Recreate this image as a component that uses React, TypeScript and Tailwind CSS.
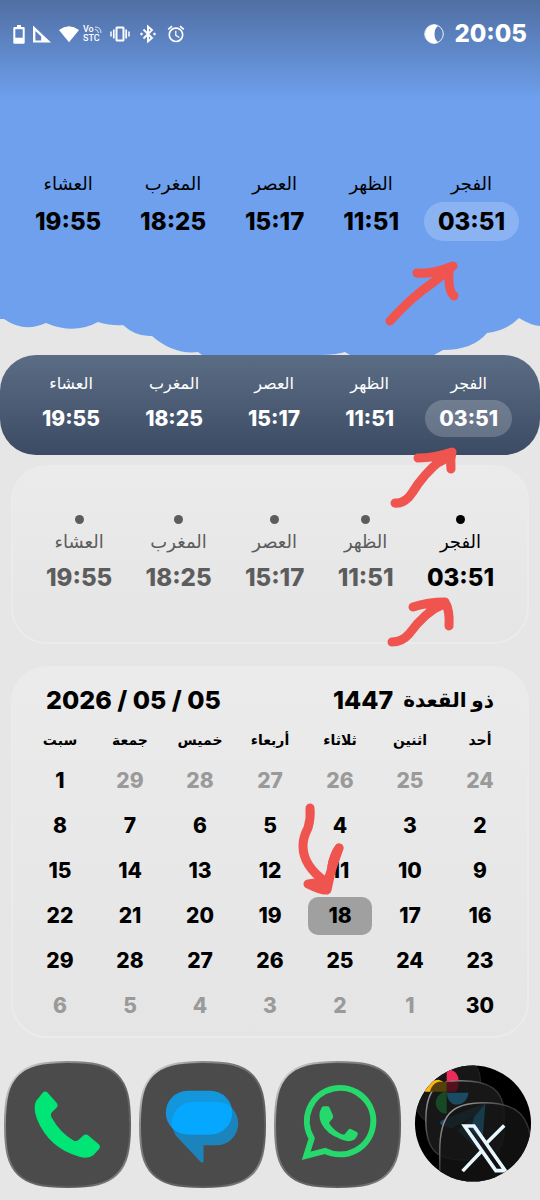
import type { ReactNode } from "react";
import clsx from "clsx";
import { MdAlarm } from "react-icons/md";

// ---------- DATA ----------
const PRAYERS = [
  { name: "الفجر", time: "03:51", next: true },
  { name: "الظهر", time: "11:51", next: false },
  { name: "العصر", time: "15:17", next: false },
  { name: "المغرب", time: "18:25", next: false },
  { name: "العشاء", time: "19:55", next: false },
];

const WEEKDAYS = ["أحد", "اثنين", "ثلاثاء", "أربعاء", "خميس", "جمعة", "سبت"];

const TODAY = 18;
const PREV_MONTH = [24, 25, 26, 27, 28, 29];
const MONTH_DAYS = 30;

// 6 weeks x 7 days, padded with the neighbouring months
const days = [
  ...PREV_MONTH.map((n) => ({ n, outside: true })),
  ...Array.from({ length: MONTH_DAYS }, (_, i) => ({ n: i + 1, outside: false })),
  ...Array.from({ length: 6 }, (_, i) => ({ n: i + 1, outside: true })),
];
const weeks = Array.from({ length: 6 }, (_, w) => days.slice(w * 7, w * 7 + 7));

// ---------- STATUS BAR ----------
function StatusBar() {
  return (
    <header className="flex items-center justify-between px-[13px] pt-4 text-white">
      <div className="flex h-9 items-center gap-2">
        <svg viewBox="0 0 12 19" className="h-[19px] w-3" aria-hidden>
          <path d="M4 0h4v2h2.500q1.200 0 1.200 1.200v14.300q0 1.200-1.200 1.200h-9Q.3 18.700.3 17.500V3.200Q.3 2 1.500 2H4z" fill="white" />
          <rect x="2.300" y="4.200" width="7.400" height="8.500" fill="#5a80c2" />
        </svg>
        <svg viewBox="0 0 18 18" className="h-[18px] w-[18px]" aria-hidden>
          <path fillRule="evenodd" d="M0 .5 18 17.500H0zM2.400 6v9.500h5.800V11.400z" fill="white" />
        </svg>
        <svg viewBox="0 0 22 18" className="h-[18px] w-5" aria-hidden>
          <path d="M0 4.500Q11-3.500 22 4.500L11 18z" fill="white" />
        </svg>
        <div className="-ml-1 flex flex-col font-['Roboto',sans-serif] text-[9px] leading-[9px] font-medium">
          <span className="flex items-center">
            Vo
            <svg viewBox="0 0 8 8" className="h-2 w-2" fill="none" stroke="white" aria-hidden>
              <path d="M1 1q6 0 6 6M1 3.500q3 0 3.500 3.500" strokeWidth="0.800" />
            </svg>
          </span>
          <span>STC</span>
        </div>
        <svg viewBox="0 0 20 16" className="h-4 w-5" fill="none" stroke="white" aria-hidden>
          <rect x="6.500" y="1.500" width="7" height="13" rx="0.500" strokeWidth="2" />
          <path d="M3.800 3.500v9M16.200 3.500v9" strokeWidth="1.700" />
          <path d="M1 5.500v5M19 5.500v5" strokeWidth="1.500" />
        </svg>
        <svg viewBox="0 0 20 20" className="h-5 w-5" fill="none" stroke="white" aria-hidden>
          <path d="M5.500 5.500 14 14l-4 3.500v-15L14 6l-8.500 8.500" strokeWidth="1.900" />
          <path d="M3.500 8.700 4.800 10 3.500 11.300 2.200 10zM16.500 8.700 17.800 10 16.500 11.300 15.200 10z" fill="white" strokeWidth="0.600" />
        </svg>
        <MdAlarm className="h-5 w-5" />
      </div>
      <div className="flex items-center gap-[10px]">
        <svg viewBox="0 0 20 20" className="h-5 w-5" aria-hidden>
          <circle cx="10" cy="10" r="9.300" fill="none" stroke="white" strokeWidth="0.900" />
          <path d="M10.500.5a9.500 9.500 0 0 0 0 19 Q12 19.500 14 18Q10.500 15.500 10.500 10T14 2Q12.500.5 10.500.5z" fill="white" />
        </svg>
        <time className="text-[24px] leading-9 font-extrabold">20:05</time>
      </div>
    </header>
  );
}

// ---------- HAND-DRAWN ARROWS ----------
function Arrow({ viewBox, className, children }: { viewBox: string; className: string; children: ReactNode }) {
  return (
    <svg
      viewBox={viewBox}
      className={clsx("pointer-events-none absolute z-10", className)}
      fill="none"
      stroke="#f0544f"
      strokeWidth="9"
      strokeLinecap="round"
      strokeLinejoin="round"
      aria-hidden
    >
      {children}
    </svg>
  );
}

// ---------- PRAYER WIDGETS ----------
function SkyWidget() {
  return (
    <ul className="flex justify-between px-[35px]">
      {PRAYERS.map((p) => (
        <li key={p.name} className="flex flex-col items-center gap-[2px]">
          <span className="text-[18px] leading-8">{p.name}</span>
          <time
            className={clsx(
              "-mx-[14px] rounded-full px-[14px] text-[24px] leading-[39px] font-extrabold",
              p.next && "bg-white/20",
            )}
          >
            {p.time}
          </time>
        </li>
      ))}
    </ul>
  );
}

function DarkWidget() {
  return (
    <section className="relative rounded-[36px] bg-linear-to-b from-[#5b6d85] to-[#3b4b63] px-[42px] pt-3 pb-[18px] text-white">
      <ul className="flex justify-between">
        {PRAYERS.map((p) => (
          <li key={p.name} className="flex flex-col items-center gap-px">
            <span className="text-[16px] leading-8">{p.name}</span>
            <time
              className={clsx(
                "-mx-[14px] rounded-full px-[14px] text-[21px] leading-[37px] font-extrabold",
                p.next && "bg-white/20",
              )}
            >
              {p.time}
            </time>
          </li>
        ))}
      </ul>
      <Arrow viewBox="388 444 72 66" className="right-20 -bottom-[55px] h-[66px] w-[72px]">
        <path d="M395 503Q402 504 409 497Q413 492 418 484Q432 465 451 453M418 458Q435 458 452 452Q450 460 451 469M440 462L450 456" />
      </Arrow>
    </section>
  );
}

function Card({ className, children }: { className: string; children: ReactNode }) {
  return (
    <section
      className={clsx(
        "relative mx-[11px] rounded-[36px] border-2 border-[#ebebeb] bg-linear-to-b from-[#ebebeb] to-[#e5e5e5]",
        className,
      )}
    >
      {children}
    </section>
  );
}

function DotsWidget() {
  return (
    <Card className="mt-[10px] px-[33px] pt-12 pb-[45px]">
      <ul className="flex justify-between">
        {PRAYERS.map((p) => (
          <li
            key={p.name}
            className={clsx("flex flex-col items-center", p.next ? "text-black" : "text-[#5c5c5c]")}
          >
            <span className="h-[9px] w-[9px] rounded-full bg-current" />
            <span className="mt-[2px] text-[18px] leading-8">{p.name}</span>
            <time className="text-[24px] leading-[39px] font-extrabold">{p.time}</time>
          </li>
        ))}
      </ul>
      <Arrow viewBox="385 595 72 55" className="right-[70px] -bottom-2 h-[55px] w-[72px]">
        <path d="M392 642Q402 642 409 634Q424 613 444 603M413 607Q428 602 445 602Q450 610 449 626M430 611L442 605" />
      </Arrow>
    </Card>
  );
}

function CalendarWidget() {
  return (
    <Card className="mt-[22px] px-3 pt-3 pb-2">
      <div className="flex items-center justify-between px-[21px] leading-10">
        <h2 className="flex gap-[10px] text-[20px] font-bold">
          ذو القعدة
          <span className="text-[25px] font-extrabold">1447</span>
        </h2>
        <time dir="ltr" className="text-[25px] font-extrabold">
          2026 / 05 / 05
        </time>
      </div>
      <table className="w-full table-fixed text-center">
        <thead>
          <tr className="h-[38px]">
            {WEEKDAYS.map((d) => (
              <th key={d} className="p-0 text-[14px] font-bold">
                {d}
              </th>
            ))}
          </tr>
        </thead>
        <tbody className="text-[21px] font-extrabold">
          {weeks.map((week, w) => (
            <tr key={w} className="h-[45px]">
              {week.map((d, i) => (
                <td key={i} className={clsx("p-0", d.outside && "text-[#9a9a9a]")}>
                  <span
                    className={clsx(
                      "mx-auto block w-16 rounded-[10px] leading-[38px]",
                      !d.outside && d.n === TODAY && "bg-[#a0a0a0]",
                    )}
                  >
                    {d.n}
                  </span>
                </td>
              ))}
            </tr>
          ))}
        </tbody>
      </table>
      <Arrow viewBox="296 800 50 100" className="top-[132px] right-[181px] h-[100px] w-[50px]">
        <path d="M310 808Q311 818 308 828Q303 837 303 846Q303 866 326 882" />
        <path d="M339 848Q334 855 332 866T327 890Q322 891 308 884Q318 883 328 880z" fill="#f0544f" />
        <path d="M339 848Q334 855 332 866" />
      </Arrow>
    </Card>
  );
}

// ---------- DOCK ----------
function Tile({ id, label, children }: { id: string; label: string; children: ReactNode }) {
  return (
    <button type="button" aria-label={label} className="min-w-0 flex-1">
      <svg viewBox="0 0 128 128" className="w-full">
        <defs>
          <linearGradient id={id} x1="0" y1="0" x2="1" y2="1">
            <stop offset="0" stopColor="#f0f0f0" />
            <stop offset="0.250" stopColor="#8a8a8a" />
            <stop offset="0.500" stopColor="#6a6a6a" />
            <stop offset="0.800" stopColor="#5a5a5a" />
            <stop offset="1" stopColor="#a5a5a5" />
          </linearGradient>
        </defs>
        <path
          d="M64 1C90 1 104 4 114 14C124 24 127 38 127 64C127 90 124 104 114 114C104 124 90 127 64 127C38 127 24 124 14 114C4 104 1 90 1 64C1 38 4 24 14 14C24 4 38 1 64 1Z"
          fill="#4b4b4b"
          stroke={`url(#${id})`}
          strokeWidth="2"
        />
        {children}
      </svg>
    </button>
  );
}

function Dock() {
  return (
    <nav dir="ltr" className="mt-[23px] flex items-center gap-2 px-1 pb-3">
      <Tile id="rim-phone" label="Phone">
        <path
          d="M39 32Q41.500 29.500 44 32L53 42Q55 44.500 53 47L48 52Q46.500 54 48 57Q57 73 70 80Q73 81.500 75 79.500L80 75Q82.500 73 85 75L95.500 84Q98 86.500 95.500 89L90 95Q85 99 76 96.500Q45 88 33 58Q29 46 32.500 40Z"
          fill="#00e676"
        />
      </Tile>
      <Tile id="rim-messages" label="Messages">
        <defs>
          <clipPath id="front-bubble">
            <rect x="27" y="30" width="67" height="44" rx="22" />
          </clipPath>
        </defs>
        <path d="M55 41H78A22 22 0 0 1 78 85H65V101Q64.500 103.500 62 101.500L37 75Q27 56 40 45Q46 41 55 41z" fill="#1b84bd" />
        <rect x="27" y="30" width="67" height="44" rx="22" fill="#1496dc" />
        <rect x="33" y="41" width="67" height="44" rx="22" fill="#05a7ff" clipPath="url(#front-bubble)" />
      </Tile>
      <Tile id="rim-whatsapp" label="WhatsApp">
        <path
          d="M32.500 95.500 38 78A33.500 33.500 0 1 1 51.500 90.500Z"
          fill="none"
          stroke="#25d96c"
          strokeWidth="6"
        />
        <path
          d="M50 45.500H54Q55.500 45.500 56 47L59.500 55Q60 56.500 59 58L56 61.500Q55.500 62.500 56 63.500Q61 71 69 74Q70.500 74.500 71.500 73.500L75 69Q76 68 77.500 68.500L83.500 71.500Q84.500 72 84.500 73.500Q83 79 78 80.500Q74 81.500 68 79Q53 74 47.500 62.500Q44 54 47.500 48Q48.500 45.500 50 45.500Z"
          fill="#25d96c"
        />
      </Tile>
      <button type="button" aria-label="Recent apps" className="min-w-0 flex-1">
        <svg viewBox="0 0 128 128" className="w-full">
          <defs>
            <clipPath id="folder">
              <circle cx="64.500" cy="63" r="58.500" />
            </clipPath>
            <linearGradient id="edge" x1="0" y1="0" x2="1" y2="1">
              <stop offset="0" stopColor="#c0c0c0" />
              <stop offset="0.400" stopColor="#3a3a3a" />
              <stop offset="1" stopColor="#1c1c1c" />
            </linearGradient>
          </defs>
          <g clipPath="url(#folder)">
            <rect width="128" height="128" fill="#000000" />
            <path d="M0 0H60Q72 5 72 20V40Q68 66 38 66Q12 66 6 44z" fill="#161616" stroke="#282828" />
            <path d="M38 8V31A12 11.500 0 0 0 38 8z" fill="#f02a58" />
            <path d="M10 31Q18 19 30 19Q38 21 38 31z" fill="#ffb70f" />
            <path
              d="M52 20C80 20 96 28 96 55V70C96 92 82 100 58 100C30 100 17 92 17 60C17 28 28 20 52 20Z"
              fill="#171717"
              stroke="url(#edge)"
              strokeWidth="1.500"
            />
            {/* lower apps shining through the glass */}
            <path d="M38 21V31H47Q51 26 50 21z" fill="#55101f" />
            <path d="M21 31Q23 23 30 21H38V31z" fill="#54400b" />
            <path d="M38 31V53A11 11 0 0 1 38 31z" fill="#174a24" />
            <path d="M38 32H60Q58 44 47 44Q39 43 38 32z" fill="#1b4a63" />
            <path d="M77 42 33 60Q29 63 34 65L43 68 65 56 49 70 70 90 75 70z" fill="#1b4d66" />
            <path
              d="M75 42C108 42 123 54 123 89V130H31V91C31 54 43 42 75 42Z"
              fill="#141414"
              fillOpacity="0.780"
              stroke="url(#edge)"
              strokeWidth="1.500"
            />
            <path d="M66 56 77 43 74 80 62 68z" fill="#1b4d66" opacity="0.600" />
            <g fill="none" stroke="#e8f6ff" strokeWidth="3.600">
              <path d="M56 65.500H65.500L97 110.500H87.500Z" />
              <path d="M96 65 78 83M73 91 54 111" />
            </g>
          </g>
        </svg>
      </button>
    </nav>
  );
}

export default function App() {
  return (
    <main
      dir="rtl"
      className="min-h-screen overflow-hidden bg-[#e6e6e6] font-['Inter','Noto_Sans','DejaVu_Sans',sans-serif] text-black"
    >
      <section className="relative bg-[#6ea0ee] bg-linear-to-b from-[#506fa3] to-[#6ea0ee] to-[100px] pb-[114px]">
        <div dir="ltr">
          <StatusBar />
        </div>
        <div className="mt-[116px]">
          <SkyWidget />
        </div>
        <svg
          viewBox="0 0 540 38"
          preserveAspectRatio="none"
          className="absolute inset-x-0 bottom-0 h-[38px] w-full"
          aria-hidden
        >
          <path
            d="M0 2H4Q24 16 46 6Q74 18 98 5Q112 9 123 8Q136 20 152 19Q174 38 198 35L202 38H0z"
            fill="#e6e6e6"
          />
          <path d="M434 38L443 33Q473 33 487 16Q506 14 519 1Q530 8 540 9V38z" fill="#e6e6e6" />
          <path d="M320 38Q336 38 345 35L350 38z" fill="#e6e6e6" />
        </svg>
        <Arrow viewBox="382 258 80 72" className="right-[78px] bottom-[26px] h-[72px] w-20">
          <path d="M390 322Q402 309 412 300Q422 291 435 282L453 267M417 274Q430 276 453 267M449 273Q448 292 454 297M436 276L447 273" />
        </Arrow>
      </section>
      <DarkWidget />
      <DotsWidget />
      <CalendarWidget />
      <Dock />
    </main>
  );
}
